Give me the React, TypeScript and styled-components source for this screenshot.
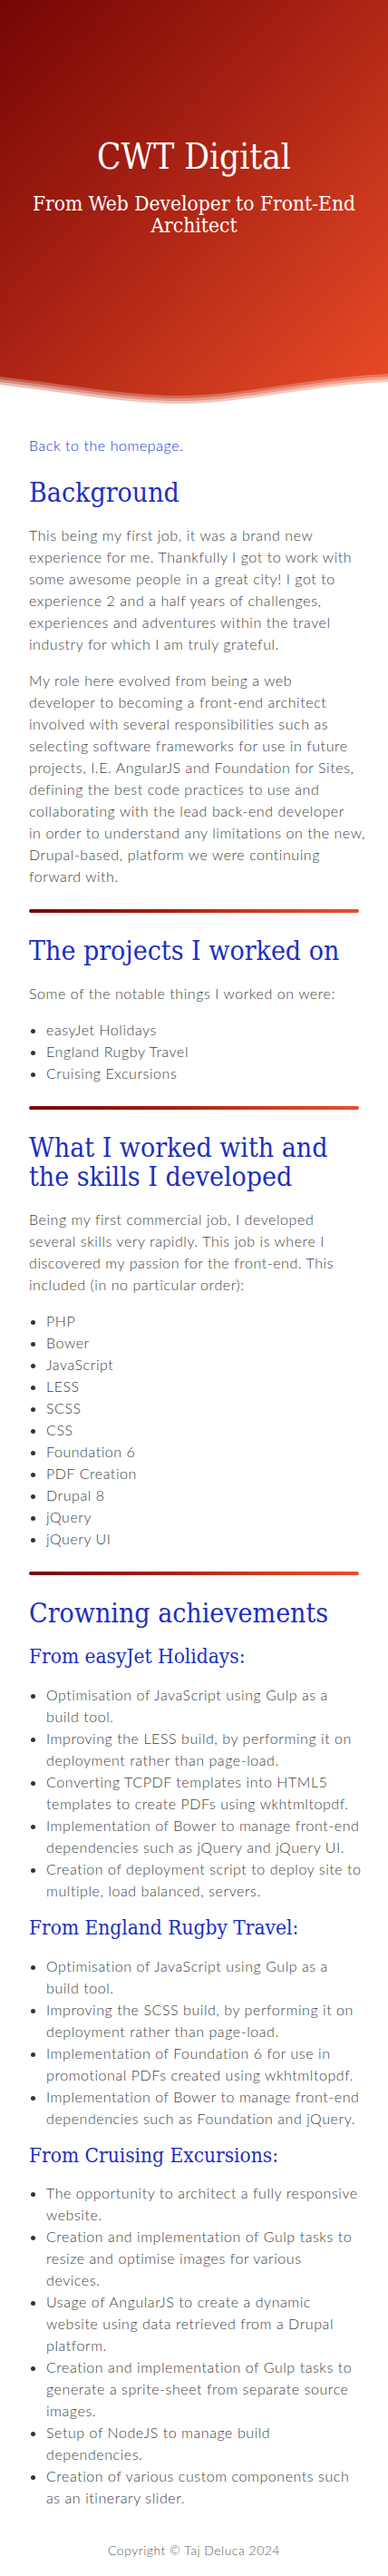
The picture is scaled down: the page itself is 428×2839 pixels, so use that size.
import React from "react";
import styled, { createGlobalStyle } from "styled-components";

const GlobalStyle = createGlobalStyle`
  html, body { margin: 0; padding: 0; background: #ffffff; }
  body {
    font-family: Lato, "Open Sans", "Liberation Sans", sans-serif;
    font-weight: 300;
    color: #3e3e3e;
    -webkit-font-smoothing: antialiased;
  }
  * { box-sizing: border-box; }
`;

const headingFont = `"DejaVu Serif", "Liberation Serif", serif`;

const Header = styled.header`
  display: flex;
  flex-direction: column;
  background: linear-gradient(to bottom right, #740604 0%, #a41f12 40%, #cd3a1e 75%, #ea4c27 100%);
  color: #ffffff;
  text-align: center;
`;

const HeaderInner = styled.div`
  height: 406px;
  padding: 149px 20px 0;
  display: flex;
  flex-direction: column;
  align-items: center;
`;

const Title = styled.h1`
  margin: 0;
  font-family: ${headingFont};
  font-stretch: condensed;
  font-weight: 400;
  font-size: 38.5px;
  line-height: 48px;
`;

const Subtitle = styled.p`
  margin: 15px 0 0;
  font-family: ${headingFont};
  font-stretch: condensed;
  font-weight: 400;
  font-size: 22.6px;
  line-height: 24px;
`;

const WaveSvg = styled.svg`
  display: block;
  width: 100%;
  height: 40px;
`;

const Main = styled.main`
  padding: 33px 32px 0;
  display: flex;
  flex-direction: column;
`;

const BackLink = styled.a`
  font-size: 16px;
  line-height: 24px;
  font-weight: 300;
  color: #2438cc;
  text-decoration: none;
  letter-spacing: 0.035em;
  align-self: flex-start;
`;

const H2 = styled.h2<{ $first?: boolean }>`
  margin: ${(p) => (p.$first ? "24px" : "26px")} 0 19px;
  font-family: ${headingFont};
  font-stretch: condensed;
  font-weight: 400;
  font-size: 30px;
  line-height: 32px;
  color: #1c2fc0;
`;

const H3 = styled.h3<{ $afterH2?: boolean }>`
  margin: ${(p) => (p.$afterH2 ? "-2px" : "14px")} 0 16px;
  font-family: ${headingFont};
  font-stretch: condensed;
  font-weight: 400;
  font-size: 22.5px;
  line-height: 28.8px;
  color: #1c2fc0;
`;

const Para = styled.p`
  margin: 0 0 16px;
  font-size: 16px;
  line-height: 24px;
  letter-spacing: 0.035em;
  white-space: nowrap;
`;

const List = styled.ul`
  margin: 0;
  padding: 0 0 0 19px;
  list-style: disc;
  font-size: 16px;
  line-height: 24px;
  letter-spacing: 0.035em;
  white-space: nowrap;
  li::marker { color: #333333; }
`;

const Divider = styled.hr`
  margin: 24px 0 0;
  height: 4px;
  border: 0;
  border-radius: 2px;
  background: linear-gradient(to right, #760704, #a51d10 40%, #d43f20 75%, #ea4f2c);
  ${Para} + & { margin-top: 8px; }
`;

const Footer = styled.footer`
  padding: 35px 32px 16px;
  text-align: center;
  font-size: 14px;
  line-height: 21px;
  color: #5e5e5e;
  letter-spacing: 0.035em;
`;

const Wave = () => (
  <WaveSvg viewBox="0 0 428 40" preserveAspectRatio="none" aria-hidden="true">
    <path d="M0 9 C90 20 150 31 205 30 C270 29 340 10 428 6 L428 40 L0 40 Z" fill="#ffffff" fillOpacity="0.25" />
    <path d="M0 12 C90 23 150 34 205 33 C270 32 340 13 428 9 L428 40 L0 40 Z" fill="#ffffff" fillOpacity="0.3" />
    <path d="M0 15 C90 26 150 37 205 36 C270 35 340 16 428 12 L428 40 L0 40 Z" fill="#ffffff" fillOpacity="0.45" />
    <path d="M0 18 C90 29 150 40 205 39 C270 38 340 19 428 15 L428 40 L0 40 Z" fill="#ffffff" />
  </WaveSvg>
);

const Lines = ({ lines }: { lines: string[] }) => (
  <>
    {lines.map((l, i) => (
      <React.Fragment key={i}>
        {i > 0 && <br />}
        {l}
      </React.Fragment>
    ))}
  </>
);

const Items = ({ items }: { items: string[][] }) => (
  <List>
    {items.map((t, i) => (
      <li key={i}>
        <Lines lines={t} />
      </li>
    ))}
  </List>
);

const background1 = [
  "This being my first job, it was a brand new",
  "experience for me. Thankfully I got to work with",
  "some awesome people in a great city! I got to",
  "experience 2 and a half years of challenges,",
  "experiences and adventures within the travel",
  "industry for which I am truly grateful.",
];

const background2 = [
  "My role here evolved from being a web",
  "developer to becoming a front-end architect",
  "involved with several responsibilities such as",
  "selecting software frameworks for use in future",
  "projects, I.E. AngularJS and Foundation for Sites,",
  "defining the best code practices to use and",
  "collaborating with the lead back-end developer",
  "in order to understand any limitations on the new,",
  "Drupal-based, platform we were continuing",
  "forward with.",
];

const skillsIntro = [
  "Being my first commercial job, I developed",
  "several skills very rapidly. This job is where I",
  "discovered my passion for the front-end. This",
  "included (in no particular order):",
];

const projects = [["easyJet Holidays"], ["England Rugby Travel"], ["Cruising Excursions"]];

const skills = [
  "PHP",
  "Bower",
  "JavaScript",
  "LESS",
  "SCSS",
  "CSS",
  "Foundation 6",
  "PDF Creation",
  "Drupal 8",
  "jQuery",
  "jQuery UI",
].map((s) => [s]);

const easyJet = [
  ["Optimisation of JavaScript using Gulp as a", "build tool."],
  ["Improving the LESS build, by performing it on", "deployment rather than page-load."],
  ["Converting TCPDF templates into HTML5", "templates to create PDFs using wkhtmltopdf."],
  ["Implementation of Bower to manage front-end", "dependencies such as jQuery and jQuery UI."],
  ["Creation of deployment script to deploy site to", "multiple, load balanced, servers."],
];

const rugby = [
  ["Optimisation of JavaScript using Gulp as a", "build tool."],
  ["Improving the SCSS build, by performing it on", "deployment rather than page-load."],
  ["Implementation of Foundation 6 for use in", "promotional PDFs created using wkhtmltopdf."],
  ["Implementation of Bower to manage front-end", "dependencies such as Foundation and jQuery."],
];

const cruising = [
  ["The opportunity to architect a fully responsive", "website."],
  ["Creation and implementation of Gulp tasks to", "resize and optimise images for various", "devices."],
  ["Usage of AngularJS to create a dynamic", "website using data retrieved from a Drupal", "platform."],
  ["Creation and implementation of Gulp tasks to", "generate a sprite-sheet from separate source", "images."],
  ["Setup of NodeJS to manage build", "dependencies."],
  ["Creation of various custom components such", "as an itinerary slider."],
];

export default function App() {
  return (
    <>
      <GlobalStyle />
      <Header>
        <HeaderInner>
          <Title>CWT Digital</Title>
          <Subtitle>
            From Web Developer to Front-End
            <br />
            Architect
          </Subtitle>
        </HeaderInner>
        <Wave />
      </Header>
      <Main>
        <BackLink href="#">Back to the homepage.</BackLink>

        <H2 $first>Background</H2>
        <Para>
          <Lines lines={background1} />
        </Para>
        <Para>
          <Lines lines={background2} />
        </Para>

        <Divider />
        <H2>The projects I worked on</H2>
        <Para>Some of the notable things I worked on were:</Para>
        <Items items={projects} />

        <Divider />
        <H2>
          What I worked with and
          <br />
          the skills I developed
        </H2>
        <Para>
          <Lines lines={skillsIntro} />
        </Para>
        <Items items={skills} />

        <Divider />
        <H2>Crowning achievements</H2>
        <H3 $afterH2>From easyJet Holidays:</H3>
        <Items items={easyJet} />
        <H3>From England Rugby Travel:</H3>
        <Items items={rugby} />
        <H3>From Cruising Excursions:</H3>
        <Items items={cruising} />
      </Main>
      <Footer>Copyright © Taj Deluca 2024</Footer>
    </>
  );
}
